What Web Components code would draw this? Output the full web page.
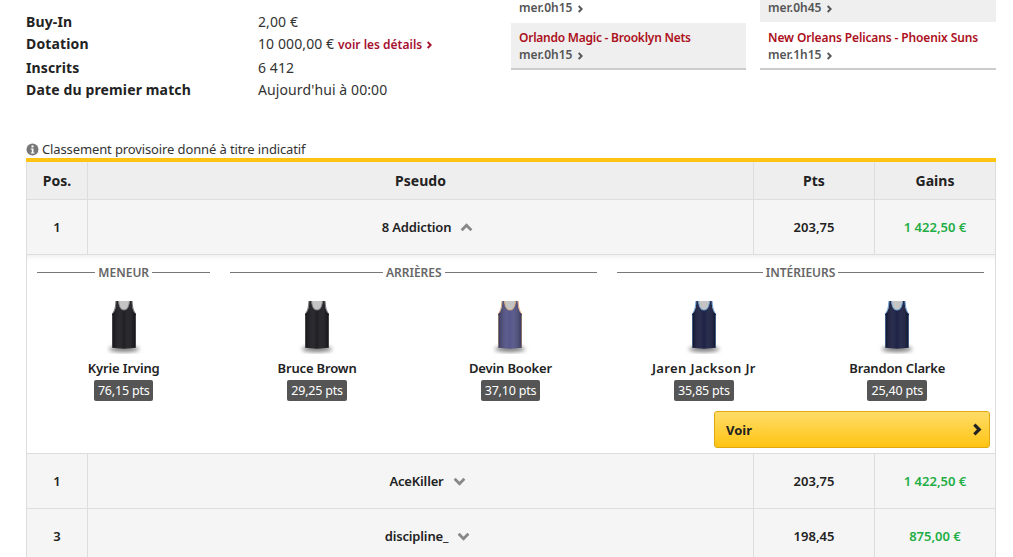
<!DOCTYPE html>
<html lang="fr">
<head>
<meta charset="utf-8">
<title>Classement</title>
<style>
  html, body { margin: 0; background: #fff; height: 557px; overflow: hidden; }
  body { font-family: "Noto Sans", sans-serif; color: #222; }
</style>
</head>
<body>
<contest-page>
  <info-row slot="info" label="Buy-In">2,00 €</info-row>
  <info-row slot="info" label="Dotation" style="margin-bottom:2px">10 000,00 € <a-more>voir les détails</a-more></info-row>
  <info-row slot="info" label="Inscrits">6 412</info-row>
  <info-row slot="info" label="Date du premier match">Aujourd'hui à 00:00</info-row>

  <match-card slot="matches" time="mer.0h15"></match-card>
  <match-card slot="matches" time="mer.0h45" shaded></match-card>
  <match-card slot="matches" teams="Orlando Magic - Brooklyn Nets" time="mer.0h15" shaded notch style="--track:-.24px"></match-card>
  <match-card slot="matches" teams="New Orleans Pelicans - Phoenix Suns" time="mer.1h15" style="--track:-.12px"></match-card>

  <rank-table>
    <rank-row pos="1" name="8 Addiction" pts="203,75" gain="1 422,50 €" open>
      <position-label>MENEUR</position-label>
      <position-label span="2">ARRIÈRES</position-label>
      <position-label span="2">INTÉRIEURS</position-label>
      <player-card name="Kyrie Irving" pts="76,15 pts" color="#17171a" trim="#77777c"></player-card>
      <player-card name="Bruce Brown" pts="29,25 pts" color="#17171a" trim="#77777c"></player-card>
      <player-card name="Devin Booker" pts="37,10 pts" color="#4f4f86" trim="#d9a878"></player-card>
      <player-card name="Jaren Jackson Jr" pts="35,85 pts" color="#14193f" trim="#6ea4d8" style="--track:.38px"></player-card>
      <player-card name="Brandon Clarke" pts="25,40 pts" color="#14193f" trim="#6ea4d8"></player-card>
    </rank-row>
    <rank-row pos="1" name="AceKiller" pts="203,75" gain="1 422,50 €"></rank-row>
    <rank-row pos="3" name="discipline_" pts="198,45" gain="875,00 €"></rank-row>
  </rank-table>
</contest-page>

<script>
const CHEVRON = (dir, color, size, stroke) => `
  <svg width="${size}" height="${size}" viewBox="0 0 12 12" aria-hidden="true" style="display:inline-block;vertical-align:middle">
    <path d="${dir === "up" ? "M1.5 8.5 6 4l4.5 4.5" : dir === "down" ? "M1.5 3.5 6 8l4.5-4.5" : "M4 1.5 8.5 6 4 10.5"}"
      fill="none" stroke="${color}" stroke-width="${stroke}"/>
  </svg>`;

class ContestPage extends HTMLElement {
  constructor() {
    super();
    this.attachShadow({ mode: "open" });
    this.shadowRoot.innerHTML = `
      <style>
        :host { display: block; padding: 0 17px 0 26px; height: 557px; overflow: hidden; font-size: 14px; }
        .top { display: flex; height: 140px; }
        .info { width: 485px; padding-top: 10px; }
        .matches { display: grid; grid-template-columns: 235px 236px; column-gap: 14px; align-content: start; }
        .note { font-size: 13px; letter-spacing: -.12px; line-height: 16px; height: 18px; color: #333; display: flex; align-items: center; gap: 3px; }
      </style>
      <div class="top">
        <div class="info"><slot name="info"></slot></div>
        <div class="matches"><slot name="matches"></slot></div>
      </div>
      <div class="note">
        <svg width="13" height="13" viewBox="0 0 13 13" aria-hidden="true">
          <circle cx="6.5" cy="6.5" r="6" fill="#777"/>
          <rect x="5.500" y="2.400" width="2" height="2" fill="#fff"/>
          <path d="M4.800 5.500h2.700v4h1v1H4.800v-1h1v-3h-1z" fill="#fff"/>
        </svg>
        Classement provisoire donné à titre indicatif
      </div>
      <slot></slot>`;
  }
}

class InfoRow extends HTMLElement {
  constructor() {
    super();
    this.attachShadow({ mode: "open" });
  }
  connectedCallback() {
    this.shadowRoot.innerHTML = `
      <style>
        :host { display: flex; height: 22px; align-items: center; font-size: 14px; }
        b { width: 232px; font-weight: 700; color: #222; letter-spacing: .14px; }
        span { color: #333; letter-spacing: .1px; }
      </style>
      <b>${this.getAttribute("label")}</b><span><slot></slot></span>`;
  }
}

class AMore extends HTMLElement {
  constructor() {
    super();
    this.attachShadow({ mode: "open" });
    this.shadowRoot.innerHTML = `
      <style>
        :host { display: inline; font-size: 12px; font-weight: 600; color: #a5112f; letter-spacing: 0; }
      </style>
      <slot></slot> ${CHEVRON("right", "#a5112f", 8, 2.8)}`;
  }
}

class MatchCard extends HTMLElement {
  constructor() {
    super();
    this.attachShadow({ mode: "open" });
  }
  connectedCallback() {
    const teams = this.getAttribute("teams");
    this.shadowRoot.innerHTML = `
      <style>
        :host {
          display: block; height: 48px; box-sizing: border-box; padding: 7px 8px 0; font-size: 12px; font-weight: 600;
          line-height: 17px; border-bottom: 2px solid #ccc;
        }
        :host(:not([teams])) {
          height: 22px; padding: 0 8px 7px; border-bottom: 0; display: flex; align-items: flex-end;
        }
        :host([shaded]) { background: #efefef; }
        :host([notch]) { background: linear-gradient(#fff 1px, #efefef 1px); }
        .teams { color: #ac0f20; white-space: nowrap; letter-spacing: var(--track, 0); }
        .time { color: #555; line-height: 15px; margin-top: 1px; }
      </style>
      ${teams ? `<div class="teams">${teams}</div>` : ""}
      <div class="time">${this.getAttribute("time")} ${CHEVRON("right", "#555", 8, 2.8)}</div>`;
  }
}

class RankTable extends HTMLElement {
  constructor() {
    super();
    this.attachShadow({ mode: "open" });
    this.shadowRoot.innerHTML = `
      <style>
        :host { display: block; width: 970px; border-top: 4px solid #ffc412; font-size: 13px; }
        .head {
          display: grid; grid-template-columns: 60px 1fr 121px 121px; height: 38px; box-sizing: border-box;
          background: #eee; border: 1px solid #ddd; border-top: 0; font-size: 14px; font-weight: 700; color: #222;
        }
        .head div { display: flex; align-items: center; justify-content: center; border-left: 1px solid #ddd; }
        .head div:first-child { border-left: 0; }
      </style>
      <div class="head"><div>Pos.</div><div>Pseudo</div><div>Pts</div><div>Gains</div></div>
      <slot></slot>`;
  }
}

class RankRow extends HTMLElement {
  constructor() {
    super();
    this.attachShadow({ mode: "open" });
  }
  connectedCallback() {
    const open = this.hasAttribute("open");
    this.shadowRoot.innerHTML = `
      <style>
        :host { display: block; font-size: 13px; font-weight: 600; color: #222; }
        .row {
          display: grid; grid-template-columns: 60px 1fr 121px 121px; height: 55px; box-sizing: border-box;
          background: #f5f5f5; border: 1px solid #ddd; border-top: 0;
        }
        .row > div { display: flex; align-items: center; justify-content: center; border-left: 1px solid #ddd; }
        .row > div:first-child { border-left: 0; }
        .row > .name { padding-left: 14px; letter-spacing: -.15px; }
        .chev { margin-left: 9px; display: inline-flex; }
        .gain { color: #1fae45; }
        .panel {
          border: 1px solid #ddd; border-top: 0; padding: 8px 11px 5px 10px; height: 199px; box-sizing: border-box;
          box-shadow: inset 0 6px 6px -6px rgba(0,0,0,.12);
        }
        .grid { display: grid; grid-template-columns: repeat(5, 1fr); column-gap: 20px; }
        .voir {
          display: flex; align-items: center; justify-content: space-between; box-sizing: border-box;
          width: 276px; height: 37px; margin: 10px -6px 0 auto; padding: 0 6px 0 11px;
          border: 1px solid #e0a90f; border-radius: 3px; background: linear-gradient(#ffdc6a, #ffc412);
          font-size: 13px; font-weight: 700; color: #222;
        }
      </style>
      <div class="row">
        <div>${this.getAttribute("pos")}</div>
        <div class="name">${this.getAttribute("name")}<span class="chev">${CHEVRON(open ? "up" : "down", "#888", 13, 2.6)}</span></div>
        <div>${this.getAttribute("pts")}</div>
        <div class="gain">${this.getAttribute("gain")}</div>
      </div>
      ${open ? `<div class="panel">
        <div class="grid"><slot></slot></div>
        <div class="voir">Voir ${CHEVRON("right", "#222", 13, 3)}</div>
      </div>` : ""}`;
  }
}

class PositionLabel extends HTMLElement {
  constructor() {
    super();
    this.attachShadow({ mode: "open" });
    this.shadowRoot.innerHTML = `
      <style>
        :host { display: flex; align-items: center; gap: 3px; height: 18px; font-size: 12px; font-weight: 600; color: #666; }
        :host([span="2"]) { grid-column: span 2; }
        i { flex: 1; height: 1px; background: #777; }
      </style>
      <i></i><slot></slot><i></i>`;
  }
}

class PlayerCard extends HTMLElement {
  constructor() {
    super();
    this.attachShadow({ mode: "open" });
  }
  connectedCallback() {
    const color = this.getAttribute("color");
    const trim = this.getAttribute("trim");
    const id = this.getAttribute("name").replace(/\W/g, "");
    const body = "M12 3h2.500c.5 6 2.500 9 5.500 9s5-3 5.500-9H28l.5 7c.5 3 2.500 5 3.500 6v33.500c-7 1.500-17 1.500-24 0V16c1-1 3-3 3.500-6z";
    this.shadowRoot.innerHTML = `
      <style>
        :host { display: flex; flex-direction: column; align-items: center; padding-top: 17px; font-size: 13px; font-weight: 600; color: #222; }
        svg { display: block; }
        .name { margin-top: 4px; line-height: 20px; white-space: nowrap; letter-spacing: var(--track, -.15px); }
        .pts { margin-top: 2px; background: #555; color: #fff; font-weight: 400; font-size: 12.5px; letter-spacing: -.2px; line-height: 21px; padding: 0 4px; border-radius: 2px; }
      </style>
      <svg width="40" height="56" viewBox="0 0 40 56" aria-hidden="true">
        <defs>
          <filter id="b${id}" x="-30%" y="-100%" width="160%" height="300%"><feGaussianBlur stdDeviation="2"/></filter>
          <filter id="s${id}"><feGaussianBlur stdDeviation=".4"/></filter>
          <linearGradient id="g${id}" x1="0" x2="1" y1="0" y2="0">
            <stop offset="0" stop-color="#000" stop-opacity=".35"/>
            <stop offset=".5" stop-color="#fff" stop-opacity=".04"/>
            <stop offset="1" stop-color="#000" stop-opacity=".35"/>
          </linearGradient>
        </defs>
        <ellipse cx="20" cy="51" rx="15" ry="3" fill="#777" filter="url(#b${id})"/>
        <g filter="url(#s${id})">
          <path d="${body}" fill="${color}"/>
          <path d="${body}" fill="url(#g${id})"/>
          <path d="M14.500 3h11c-.5 6-2.500 9-5.500 9s-5-3-5.500-9z" fill="#c4c4c4"/>
          <path d="M14.500 3c.5 6 2.500 9 5.500 9s5-3 5.500-9" fill="none" stroke="${trim}" stroke-width="1"/>
          <path d="M12 3c-.2 5-1.500 11-4 13M28 3c.2 5 1.500 11 4 13" fill="none" stroke="${trim}" stroke-width="1"/>
          <path d="M8.500 17v32M31.500 17v32" stroke="${trim}" stroke-width="1" opacity=".5"/>
        </g>
      </svg>
      <div class="name">${this.getAttribute("name")}</div>
      <div class="pts">${this.getAttribute("pts")}</div>`;
  }
}

customElements.define("contest-page", ContestPage);
customElements.define("info-row", InfoRow);
customElements.define("a-more", AMore);
customElements.define("match-card", MatchCard);
customElements.define("rank-table", RankTable);
customElements.define("rank-row", RankRow);
customElements.define("position-label", PositionLabel);
customElements.define("player-card", PlayerCard);
</script>
</body>
</html>
